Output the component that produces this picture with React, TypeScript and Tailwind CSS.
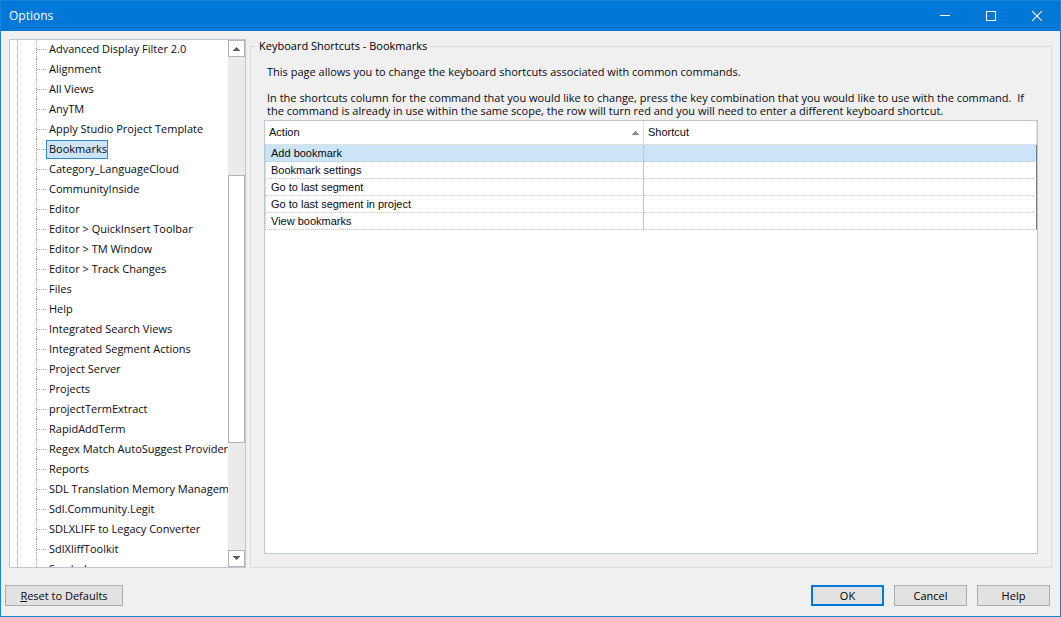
import { useState } from "react";

const categories = [
  "Advanced Display Filter 2.0",
  "Alignment",
  "All Views",
  "AnyTM",
  "Apply Studio Project Template",
  "Bookmarks",
  "Category_LanguageCloud",
  "CommunityInside",
  "Editor",
  "Editor > QuickInsert Toolbar",
  "Editor > TM Window",
  "Editor > Track Changes",
  "Files",
  "Help",
  "Integrated Search Views",
  "Integrated Segment Actions",
  "Project Server",
  "Projects",
  "projectTermExtract",
  "RapidAddTerm",
  "Regex Match AutoSuggest Provider",
  "Reports",
  "SDL Translation Memory Managem",
  "Sdl.Community.Legit",
  "SDLXLIFF to Legacy Converter",
  "SdlXliffToolkit",
  "Symbols",
];

const actions = [
  "Add bookmark",
  "Bookmark settings",
  "Go to last segment",
  "Go to last segment in project",
  "View bookmarks",
];

function TitleBar() {
  return (
    <header className="flex h-[30px] shrink-0 items-center justify-between bg-[#0078d7] pl-2 text-white">
      <h1 className="text-[12px]">Options</h1>
      <div className="flex h-full">
        <button type="button" aria-label="Minimize" className="flex w-[46px] items-center justify-center">
          <svg width="10" height="10" viewBox="0 0 10 10" shapeRendering="crispEdges">
            <path d="M0 4.5h10" stroke="currentColor" />
          </svg>
        </button>
        <button type="button" aria-label="Maximize" className="flex w-[46px] items-center justify-center">
          <svg width="10" height="10" viewBox="0 0 10 10" shapeRendering="crispEdges">
            <path d="M.5.5h9v9h-9z" fill="none" stroke="currentColor" />
          </svg>
        </button>
        <button type="button" aria-label="Close" className="flex w-[46px] items-center justify-center">
          <svg width="10" height="10" viewBox="0 0 10 10">
            <path d="M0 0l10 10M10 0L0 10" stroke="currentColor" strokeWidth="1.2" />
          </svg>
        </button>
      </div>
    </header>
  );
}

function ScrollBar() {
  const arrowButton = "flex h-[17px] shrink-0 items-center justify-center border border-[#b4b4b4] bg-white text-[#606060]";

  return (
    <div className="flex w-[17px] shrink-0 flex-col bg-[#ebebeb]">
      <button type="button" aria-label="Scroll up" className={arrowButton}>
        <svg width="7" height="4" viewBox="0 0 7 4" shapeRendering="crispEdges">
          <path d="M3 0h1v1h1v1h1v1h1v1H0V3h1V2h1V1h1z" fill="currentColor" />
        </svg>
      </button>
      <div className="grow-118 basis-0" />
      <div className="grow-268 basis-0 border border-[#b4b4b4] bg-white" />
      <div className="grow-107 basis-0" />
      <button type="button" aria-label="Scroll down" className={arrowButton}>
        <svg width="7" height="4" viewBox="0 0 7 4" shapeRendering="crispEdges">
          <path d="M3 4h1V3h1V2h1V1h1V0H0v1h1v1h1v1h1z" fill="currentColor" />
        </svg>
      </button>
    </div>
  );
}

function CategoryTree({ selected, onSelect }: { selected: string; onSelect: (name: string) => void }) {
  return (
    <nav aria-label="Categories" className="flex w-[237px] shrink-0 border border-[#bcc8d0] bg-white">
      <div className="min-w-0 flex-1 overflow-hidden pl-[7px]">
        <ul className="-mt-px border-l border-dotted border-[#a0a0a0] pl-[18px]">
          {categories.map((name) => (
            <li key={name} className="flex h-5 items-center border-l border-dotted border-[#a0a0a0]">
              <span className="w-[9px] shrink-0 border-t border-dotted border-[#a0a0a0]" />
              <button
                type="button"
                onClick={() => onSelect(name)}
                className={`h-[19px] border pb-px pl-[2px] leading-4 whitespace-nowrap ${
                  name === selected ? "border-[#2f8ad6] bg-[#cce4f7]" : "border-transparent"
                }`}
              >
                {name}
              </button>
            </li>
          ))}
        </ul>
      </div>
      <ScrollBar />
    </nav>
  );
}

function ShortcutTable() {
  const [activeRow, setActiveRow] = useState(actions[0]);

  return (
    <div className="min-h-0 flex-1 border border-[#bcc8d0] bg-white font-['Liberation_Sans',Arial,sans-serif] text-[11px]">
      <table className="w-full table-fixed border-separate border-spacing-0 text-left">
        <thead>
          <tr className="h-6">
            <th className="w-[379px] border-r border-b border-[#e0e0e0] px-1 font-normal">
              <div className="flex items-center justify-between">
                Action
                <svg width="7" height="4" viewBox="0 0 7 4" shapeRendering="crispEdges">
                  <path d="M3 0h1v1h1v1h1v1h1v1H0V3h1V2h1V1h1z" fill="#8c8c8c" />
                </svg>
              </div>
            </th>
            <th className="border-r border-b border-[#e0e0e0] px-1 font-normal">Shortcut</th>
          </tr>
        </thead>
        <tbody>
          {actions.map((action) => (
            <tr key={action} onClick={() => setActiveRow(action)} className={action === activeRow ? "bg-[#cce4f7]" : ""}>
              <td className="h-[17px] border-r border-b border-l border-[#bcc8d0] [border-style:none_solid_dotted_dotted] px-[5px] leading-4">
                {action}
              </td>
              <td className="h-[17px] border-r border-b border-r-[#7a7a7a] border-b-[#bcc8d0] [border-style:none_solid_dotted_none]" />
            </tr>
          ))}
        </tbody>
      </table>
    </div>
  );
}

function ShortcutPanel({ category }: { category: string }) {
  return (
    <fieldset className="flex min-w-0 flex-1 flex-col border border-[#dcdcdc] px-[13px] pb-[13px]">
      <legend className="-ml-2 px-[3px] leading-[14px] font-medium text-black">Keyboard Shortcuts - {category}</legend>
      <div className="px-[3px] pt-3 pb-[3px] leading-[13px] font-medium">
        <p>This page allows you to change the keyboard shortcuts associated with common commands.</p>
        <p className="mt-[13px] whitespace-pre-wrap">
          {"In the shortcuts column for the command that you would like to change, press the key combination that you would like to use with the command.  If the command is already in use within the same scope, the row will turn red and you will need to enter a different keyboard shortcut."}
        </p>
      </div>
      <ShortcutTable />
    </fieldset>
  );
}

export default function App() {
  const [category, setCategory] = useState("Bookmarks");
  const button = "h-[21px] w-[73px] border border-[#adadad] bg-[#e1e1e1] pt-px font-medium text-black";

  return (
    <div className="flex h-screen flex-col border border-[#1883d7] bg-[#f0f0f0] font-['Open_Sans','Segoe_UI',sans-serif] text-[11px] text-[#0a0a14]">
      <TitleBar />
      <main className="flex min-h-0 flex-1 gap-1 px-2 pt-2">
        <CategoryTree selected={category} onSelect={setCategory} />
        <ShortcutPanel category={category} />
      </main>
      <footer className="flex items-center justify-between pt-[17px] pr-[10px] pb-[10px] pl-1">
        <button type="button" className="h-[21px] w-[118px] border border-[#adadad] bg-[#e1e1e1] pt-px font-medium">
          <span className="underline">R</span>eset to Defaults
        </button>
        <div className="flex gap-[10px]">
          <button type="button" className="h-[21px] w-[73px] border-2 border-[#0078d7] bg-[#e1e1e1] pt-px font-medium text-black">
            OK
          </button>
          <button type="button" className={button}>
            Cancel
          </button>
          <button type="button" className={button}>
            Help
          </button>
        </div>
      </footer>
    </div>
  );
}
